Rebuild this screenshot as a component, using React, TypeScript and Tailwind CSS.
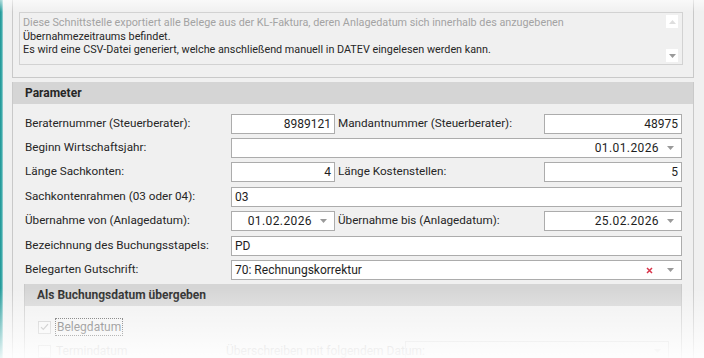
import React from 'react';

const Arrow = ({ faded }: { faded?: boolean }) => (
  <svg width="7" height="4" viewBox="0 0 7 4" className="shrink-0">
    <path d="M0 0h7L3.5 4z" fill={faded ? '#d8d8d8' : '#9a9a9a'} />
  </svg>
);

const TextBox = ({ value, right, className = '' }: { value: string; right?: boolean; className?: string }) => (
  <div
    className={`h-[20px] bg-white border border-[#acacac] flex items-center px-[3px] text-[12px] text-[#1e1e1e] ${
      right ? 'justify-end' : ''
    } ${className}`}
  >
    {value}
  </div>
);

const DateBox = ({ value, className = '' }: { value: string; className?: string }) => (
  <div className={`h-[20px] bg-white border border-[#acacac] flex items-center justify-end gap-[8px] pr-[7px] text-[12px] text-[#1e1e1e] ${className}`}>
    <span className="tracking-[0.4px]">{value}</span>
    <Arrow />
  </div>
);

const Label = ({ children, className = '' }: { children: React.ReactNode; className?: string }) => (
  <div className={`text-[11.7px] text-[#262626] pl-[1px] whitespace-nowrap ${className}`}>{children}</div>
);

export default function App() {
  return (
    <div className="w-[704px] h-[358px] relative overflow-hidden bg-[#f0f0f0] flex font-['Roboto',sans-serif]">
      <div className="w-[3px] shrink-0 bg-gradient-to-r from-[#1c9494] via-[#3aa8a8] to-[#9fd6d6]" />
      <div className="flex-1 pl-[9px] pr-[10px]">
        {/* description box */}
        <div className="h-[78px] border-x border-b border-[#c9c9c9] pt-[12px] pl-[6px] pr-[10px]">
          <div className="h-[53px] border border-[#d2d2d2] relative pl-[3px] pt-[3px] text-[10.8px] leading-[13.5px] text-[#262626]">
            <div className="text-[#a3a3a3]">
              Diese Schnittstelle exportiert alle Belege aus der KL-Faktura, deren Anlagedatum sich innerhalb des anzugebenen
            </div>
            <div>Übernahmezeitraums befindet.</div>
            <div>Es wird eine CSV-Datei generiert, welche anschließend manuell in DATEV eingelesen werden kann.</div>
            <div className="absolute right-[3px] top-[1px] w-[14px] h-[15px] bg-white border border-[#f0f0f0] flex items-center justify-center">
              <svg width="7" height="4" viewBox="0 0 7 4">
                <path d="M3.5 0L7 4H0z" fill="#dedede" />
              </svg>
            </div>
            <div className="absolute right-[3px] bottom-[1px] w-[14px] h-[15px] bg-white border border-[#f0f0f0] flex items-center justify-center">
              <Arrow />
            </div>
          </div>
        </div>

        {/* Parameter group */}
        <div className="mt-[4px] border-x border-[#c9c9c9] h-[300px]">
          <div className="h-[22px] bg-[#d5d5d5] flex items-center pl-[12px] text-[12px] font-bold text-[#262626]">
            Parameter
          </div>
          <div className="pl-[11px] pr-[11px] pt-[10px]">
            <div className="flex flex-col gap-[4px]">
              <div className="flex items-center h-[20px]">
                <Label className="w-[207px]">Beraternummer (Steuerberater):</Label>
                <TextBox value="8989121" right className="w-[104px]" />
                <Label className="w-[209px] pl-[3px]">Mandantnummer (Steuerberater):</Label>
                <TextBox value="48975" right className="flex-1" />
              </div>
              <div className="flex items-center h-[20px]">
                <Label className="w-[207px]">Beginn Wirtschaftsjahr:</Label>
                <DateBox value="01.01.2026" className="flex-1" />
              </div>
              <div className="flex items-center h-[20px]">
                <Label className="w-[207px]">Länge Sachkonten:</Label>
                <TextBox value="4" right className="w-[104px]" />
                <Label className="w-[209px] pl-[3px]">Länge Kostenstellen:</Label>
                <TextBox value="5" right className="flex-1" />
              </div>
              <div className="flex items-center h-[20px] mt-[1px]">
                <Label className="w-[207px]">Sachkontenrahmen (03 oder 04):</Label>
                <TextBox value="03" className="flex-1" />
              </div>
              <div className="flex items-center h-[20px]">
                <Label className="w-[207px]">Übernahme von (Anlagedatum):</Label>
                <DateBox value="01.02.2026" className="w-[104px]" />
                <Label className="w-[209px] pl-[3px]">Übernahme bis (Anlagedatum):</Label>
                <DateBox value="25.02.2026" className="flex-1" />
              </div>
              <div className="flex items-center h-[20px] mt-[1px]">
                <Label className="w-[207px]">Bezeichnung des Buchungsstapels:</Label>
                <TextBox value="PD" className="flex-1" />
              </div>
              <div className="flex items-center h-[20px]">
                <Label className="w-[207px]">Belegarten Gutschrift:</Label>
                <div className="flex-1 h-[20px] bg-white border border-[#acacac] flex items-center px-[3px] pr-[7px] text-[12px] text-[#1e1e1e]">
                  <span className="flex-1">70: Rechnungskorrektur</span>
                  <svg width="7" height="7" viewBox="0 0 7 7" className="mr-[14px]">
                    <path d="M1 1l5 5M6 1L1 6" stroke="#d9344a" strokeWidth="1.5" />
                  </svg>
                  <Arrow />
                </div>
              </div>
            </div>

            {/* inner group */}
            <div className="mt-[4px] border-x border-[#c9c9c9] h-[80px]">
              <div className="h-[22px] bg-[#d5d5d5] flex items-center pl-[12px] text-[12px] font-bold text-[#262626]">
                Als Buchungsdatum übergeben
              </div>
              <div className="pl-[13px] pt-[11px]">
                <div className="flex items-center h-[20px] gap-[4px]">
                  <div className="w-[13px] h-[13px] border border-[#c4c4c4] bg-[#f4f4f4] flex items-center justify-center">
                    <svg width="9" height="8" viewBox="0 0 9 8">
                      <path d="M1 4.2l2.3 2.3L8 1.2" stroke="#a8a8a8" strokeWidth="1.2" fill="none" />
                    </svg>
                  </div>
                  <div className="border border-dotted border-[#444] px-[1px] text-[12px] text-[#4a4a4a] leading-[16px]">
                    Belegdatum
                  </div>
                </div>
                <div className="flex items-center h-[20px] mt-[4px]">
                  <div className="w-[13px] h-[13px] border border-[#cfcfcf] bg-[#f4f4f4]" />
                  <div className="w-[175px] pl-[5px] text-[12px] text-[#b4b4b4]">Termindatum</div>
                  <div className="w-[179px] text-[12px] text-[#b4b4b4] whitespace-nowrap">Überschreiben mit folgendem Datum:</div>
                  <div className="w-[264px] h-[20px] border border-[#d4d4d4] flex items-center justify-end pr-[7px]">
                    <Arrow faded />
                  </div>
                </div>
              </div>
            </div>
          </div>
        </div>
      </div>
      <div className="absolute left-0 right-0 bottom-0 h-[70px] bg-gradient-to-b from-[rgba(255,255,255,0)] to-[rgba(255,255,255,0.9)] pointer-events-none" />
      <div className="absolute left-0 right-0 top-0 h-[12px] bg-gradient-to-b from-[rgba(255,255,255,0.6)] to-[rgba(255,255,255,0)] pointer-events-none" />
    </div>
  );
}
